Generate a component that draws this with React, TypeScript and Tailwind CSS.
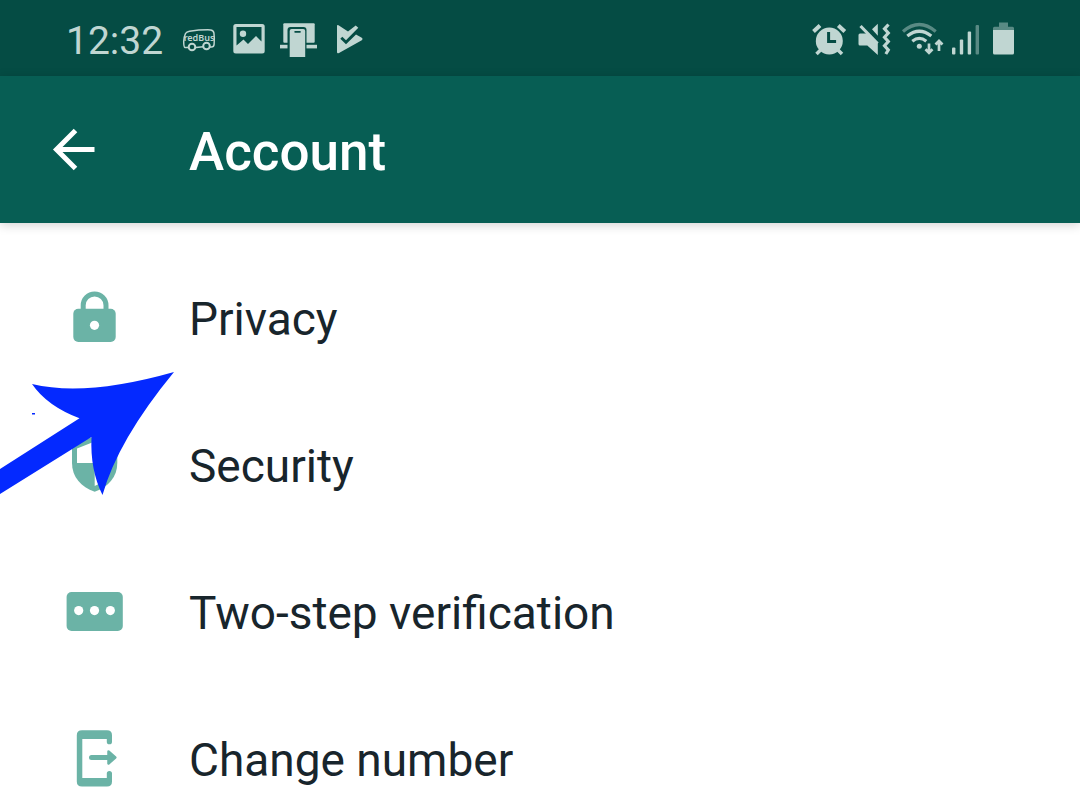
import type { ReactNode } from "react";

const LIGHT = "#c0d6d2";
const DARK = "#054c44";
const TEAL = "#6bb3a6";

function BusIcon() {
  return (
    <svg className="h-10 w-[50px]" viewBox="174 20 50 40" fill="none" stroke={LIGHT} strokeWidth="1.500" aria-hidden="true">
      <path d="M188 47.500h-3c-1.300-.3-1.300-3-1.300-6 .2-3.500.8-6 1.800-8 .8-1.500 2-2 4-2.300 7-1 16-1.400 21-1.300 2 .1 3 1 3.400 3 .5 3.500.6 7.500.2 11.500-.2 1.800-.8 2.600-2.600 2.700h-1.500M196 47.600l7-.8" />
      <circle cx="192" cy="47" r="3.300" strokeWidth="2" />
      <circle cx="206.500" cy="46" r="3.300" strokeWidth="2" />
      <text x="199" y="40.800" textAnchor="middle" fill={LIGHT} stroke="none" fontFamily="Noto Sans, sans-serif" fontWeight="600" fontSize="9">
        redBus
      </text>
    </svg>
  );
}

function PictureIcon() {
  return (
    <svg className="h-10 w-[50px]" viewBox="224 20 50 40" aria-hidden="true">
      <rect x="233.300" y="24" width="31.400" height="29.500" rx="2.500" fill={LIGHT} />
      <path d="M236.500 27h25v14.500l-5.500-5.500-8 8-4.500-4.500-7 6z" fill={DARK} />
      <circle cx="243" cy="33.700" r="3.200" fill={LIGHT} />
    </svg>
  );
}

function PhoneDeskIcon() {
  return (
    <svg className="h-10 w-[50px]" viewBox="274 20 50 40" aria-hidden="true">
      <rect x="283.300" y="23.300" width="31.400" height="19.400" rx="1" fill={LIGHT} />
      <rect x="280" y="44.800" width="37" height="3.600" fill={LIGHT} />
      <path d="M287.500 57V30q0-3 3-3h13q3 0 3 3v27z" fill={DARK} />
      <path d="M289.700 57V31q0-2 2-2h11.500q2 0 2 2v26z" fill={LIGHT} />
      <rect x="294.300" y="31" width="6.500" height="1.700" rx=".8" fill={DARK} />
    </svg>
  );
}

function PlayCheckIcon() {
  return (
    <svg className="h-10 w-[50px]" viewBox="324 20 50 40" aria-hidden="true">
      <path d="M337 26q0-1.500 1.500-.7l9.500 6.200 7.700-6 2.600 2.300-12.300 12.500-3.700-3.500-2 2 5.700 5.500L356 34.500l5.800 3.300q1.800 1.300 0 2.500l-22.800 12.700q-2 1-2-1z" fill={LIGHT} />
    </svg>
  );
}

function AlarmIcon() {
  return (
    <svg className="h-10 w-[46px]" viewBox="806 20 46 40" fill="none" stroke={LIGHT} strokeWidth="4" aria-hidden="true">
      <circle cx="829.300" cy="41" r="13.500" fill={LIGHT} stroke="none" />
      <path d="M813.500 31.500l6.500-6M838.300 25.500l6.500 6" />
      <path d="M816.500 54l5-5M842 54l-5-5" strokeWidth="3.500" />
      <path d="M828.600 32v9.500h7.500" stroke={DARK} strokeWidth="3" />
    </svg>
  );
}

function MuteVibrateIcon() {
  return (
    <svg className="h-10 w-11" viewBox="852 20 44 40" fill={LIGHT} aria-hidden="true">
      <path d="M860 33.500h8l9.800 9.800v11.700l-10.500-9.500H860q-1.500 0-1.500-1.500v-9q0-1.500 1.500-1.500z" />
      <path d="M872 29.300l5.800-5.500v12z" />
      <path d="M860.500 26l17 17.500" stroke={LIGHT} strokeWidth="3.200" />
      <path d="M888.500 24.500l-4 4.300 3.800 4.200-3.800 4.300 3.800 4.200-3.800 4.300 3.800 4.200-2.500 4" fill="none" stroke={LIGHT} strokeWidth="3.200" />
    </svg>
  );
}

function WifiIcon() {
  return (
    <svg className="h-10 w-[52px]" viewBox="896 20 52 40" fill="none" stroke={LIGHT} strokeWidth="3.200" aria-hidden="true">
      <path d="M903 31.500q16.300-14 32.700 0" opacity=".45" />
      <path d="M907.300 36q12-9.500 24 0M912.300 41.200q7-5.600 14 0" />
      <circle cx="919.300" cy="46.300" r="2.500" fill={LIGHT} stroke="none" />
      <path d="M929 43.500v9M925.500 49.300l3.500 3.500 3.500-3.500M939 51V41.500M935.500 44.500l3.500-3.500 3.500 3.500" strokeWidth="2.700" />
    </svg>
  );
}

function SignalIcon() {
  return (
    <svg className="h-10 w-9" viewBox="948 20 36 40" fill={LIGHT} aria-hidden="true">
      <rect x="952" y="47.500" width="3.400" height="7" rx="1" />
      <rect x="959.800" y="39.500" width="3.400" height="15" rx="1" />
      <rect x="967.700" y="31.500" width="3.400" height="23" rx="1" />
      <rect x="975.600" y="25" width="3.400" height="29.500" rx="1" opacity=".45" />
    </svg>
  );
}

function BatteryIcon() {
  return (
    <svg className="h-10 w-10" viewBox="984 20 40 40" fill={LIGHT} aria-hidden="true">
      <path d="M999 22.500h9v4.300h4.500q1.500 0 1.500 1.500V30h-21v-1.700q0-1.500 1.500-1.500h4.500z" opacity=".45" />
      <path d="M993 30h21v23q0 1.500-1.500 1.500h-18q-1.500 0-1.500-1.500z" />
    </svg>
  );
}

function RowIcon({ viewBox, children }: { viewBox: string; children: ReactNode }) {
  return (
    <svg className="h-[63px] w-16 shrink-0" viewBox={viewBox} fill={TEAL} aria-hidden="true">
      {children}
    </svg>
  );
}

const rows = [
  {
    label: "Privacy",
    icon: (
      <RowIcon viewBox="63 288 64 63">
        <rect x="73.300" y="308.700" width="42.400" height="33.300" rx="5" />
        <path d="M83.200 310v-4.700a11.400 11.400 0 0 1 22.800 0v4.700" fill="none" stroke={TEAL} strokeWidth="5" />
        <circle cx="94.500" cy="325.300" r="4.600" fill="#fff" />
      </RowIcon>
    ),
  },
  {
    label: "Security",
    icon: (
      <RowIcon viewBox="63 435 64 63">
        <path d="M94.700 436l22.600 9v18c0 14-9 24-22.600 28.700C81 487 72 477 72 463v-18z" />
        <path d="M77 448.500l17.700-7V463H77zM94.700 463h17.600c-1.500 11-8 18.500-17.600 23z" fill="#fff" />
      </RowIcon>
    ),
  },
  {
    label: "Two-step verification",
    icon: (
      <RowIcon viewBox="63 582 64 63">
        <rect x="66.600" y="592" width="56.200" height="39" rx="5" />
        <g fill="#fff">
          <circle cx="78.700" cy="610.600" r="4.600" />
          <circle cx="94.500" cy="610.600" r="4.600" />
          <circle cx="110.300" cy="610.600" r="4.600" />
        </g>
      </RowIcon>
    ),
  },
  {
    label: "Change number",
    icon: (
      <RowIcon viewBox="63 729 64 63">
        <path d="M82 730.200h25q5 0 5 5v6.500a2.600 2.600 0 0 1-5.200 0V739H82.300v39h24.500v-4.500a2.600 2.600 0 0 1 5.200 0v8q0 5-5 5H82q-5.200 0-5.200-5v-46.300q0-5 5.200-5z" />
        <path d="M91.500 757.500H108" stroke={TEAL} strokeWidth="5" strokeLinecap="round" />
        <path d="M108.500 751.500l6.800 6-6.800 6z" stroke={TEAL} strokeWidth="2.500" strokeLinejoin="round" />
      </RowIcon>
    ),
  },
];

export default function App() {
  return (
    <div className="relative h-screen overflow-hidden bg-white font-[Roboto,sans-serif]">
      <div className="flex h-[76px] items-center justify-between bg-[#054c44] pt-1 pr-14 pl-[66px]">
        <div className="flex items-center">
          <time className="w-[108px] pt-0.5 text-[39px] leading-10 text-[#c0d6d2]">12:32</time>
          <BusIcon />
          <PictureIcon />
          <PhoneDeskIcon />
          <PlayCheckIcon />
        </div>
        <div className="flex items-center">
          <AlarmIcon />
          <MuteVibrateIcon />
          <WifiIcon />
          <SignalIcon />
          <BatteryIcon />
        </div>
      </div>

      <header className="flex h-[147px] items-center bg-[#075e54] pl-[42px] text-white shadow-[0_2px_10px_rgba(0,0,0,0.18)]">
        <button type="button" aria-label="Back" className="w-[147px]">
          <svg className="h-16 w-16" viewBox="42 118 64 64" fill="none" stroke="#fff" strokeWidth="5" aria-hidden="true">
            <path d="M94.500 149.500H56M75.500 130.500l-19 19 19 19" />
          </svg>
        </button>
        <h1 className="pt-1 text-[53px] leading-[60px] font-medium">Account</h1>
      </header>

      <nav className="pt-[23px]">
        <ul>
          {rows.map((row) => (
            <li key={row.label}>
              <a href="#" className="flex h-[147px] items-center gap-[62px] pl-[63px] text-[46px] leading-[54px] text-[#18252c]">
                {row.icon}
                <span className="pb-0.5">{row.label}</span>
              </a>
            </li>
          ))}
        </ul>
      </nav>

      <svg className="pointer-events-none absolute top-[370px] left-0 h-32 w-44" viewBox="0 370 176 128" fill="#0429ff" aria-hidden="true">
        <path d="M174 372Q86 397 32 384Q47 406 79.500 418.300L0 469V494L91.500 437Q90 470 102.500 495Q118 440 174 372z" />
        <rect x="32" y="413" width="3" height="1.500" />
      </svg>
    </div>
  );
}
